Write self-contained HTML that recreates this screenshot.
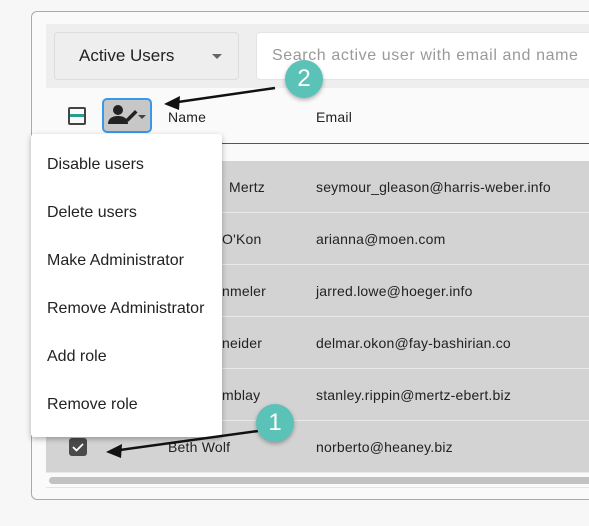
<!DOCTYPE html><html><head><style>
body{margin:0;width:589px;height:526px;background:#f7f7f7;font-family:"Liberation Sans",sans-serif;position:relative;overflow:hidden;color:#222}
.a{position:absolute}
.card{left:31px;top:11px;width:600px;height:487px;border:1px solid #aaa;border-radius:6px;background:#fafafa}
.row{left:46px;width:560px;height:51px;background:#d3d3d3;border-bottom:1px solid #e8e8e8}
.t{font-size:14px;color:#222;letter-spacing:.2px}
.m{left:47px;font-size:16px;color:#222}
.badge{width:38px;height:38px;border-radius:50%;background:#5bc2b8;color:#fff;font-size:24px;text-align:center;line-height:38px;box-shadow:0 2px 4px rgba(0,0,0,.3)}
</style></head><body>
<div class="a card"></div>
<div class="a" style="left:46px;top:24px;width:560px;height:64px;background:#eee"></div>
<div class="a" style="left:54px;top:32px;width:183px;height:46px;border:1px solid #ddd;border-radius:4px;background:#eee"></div>
<div class="a" style="left:79px;top:46px;font-size:17px;color:#222">Active Users</div>
<div class="a" style="left:212px;top:54px;border-left:5px solid transparent;border-right:5px solid transparent;border-top:5px solid #666"></div>
<div class="a" style="left:256px;top:32px;width:340px;height:46px;border:1px solid #e4e4e4;border-radius:4px;background:#fff"></div>
<div class="a" style="left:272px;top:47px;font-size:16px;color:#999;letter-spacing:.6px">Search active user with email and name</div>
<div class="a" style="left:68px;top:107px;width:18px;height:18px;border:2px solid #444;border-radius:2px;box-sizing:border-box"></div>
<div class="a" style="left:70px;top:114px;width:14px;height:3px;background:#2a9d8f"></div>
<div class="a" style="left:102px;top:98px;width:50px;height:35px;border:2px solid #3b97e8;border-radius:5px;background:#c7c7c7;box-sizing:border-box"></div>
<svg class="a" style="left:104px;top:100px" width="46" height="31"><circle cx="14" cy="10" r="5" fill="#222"/><path d="M4 24c0-6 5-8 10-8s10 2 10 8z" fill="#222"/><path d="M22 19l9-9 2.5 2.5-9 9h-2.5z" fill="#222"/><path d="M34 15h8l-4 4z" fill="#444"/></svg>
<div class="a t" style="left:168px;top:109px">Name</div>
<div class="a t" style="left:316px;top:109px">Email</div>
<div class="a" style="left:46px;top:143px;width:560px;height:1px;background:#555"></div>
<div class="a row" style="top:161px"></div><div class="a row" style="top:213px"></div><div class="a row" style="top:265px"></div><div class="a row" style="top:317px"></div><div class="a row" style="top:369px"></div><div class="a row" style="top:421px"></div>
<div class="a t" style="left:229px;top:179px">Mertz</div><div class="a t" style="left:316px;top:179px">seymour_gleason@harris-weber.info</div>
<div class="a t" style="left:222px;top:231px">O'Kon</div><div class="a t" style="left:316px;top:231px">arianna@moen.com</div>
<div class="a t" style="left:222px;top:283px">nmeler</div><div class="a t" style="left:316px;top:283px">jarred.lowe@hoeger.info</div>
<div class="a t" style="left:222px;top:335px">neider</div><div class="a t" style="left:316px;top:335px">delmar.okon@fay-bashirian.co</div>
<div class="a t" style="left:222px;top:387px">mblay</div><div class="a t" style="left:316px;top:387px">stanley.rippin@mertz-ebert.biz</div>
<div class="a t" style="left:168px;top:439px">Beth Wolf</div><div class="a t" style="left:316px;top:439px">norberto@heaney.biz</div>
<div class="a" style="left:69px;top:438px;width:18px;height:18px;background:#4a4a4a;border-radius:3px"></div>
<svg class="a" style="left:69px;top:438px" width="18" height="18"><path d="M4 9l3.5 3.5L14 6" stroke="#fff" stroke-width="1.8" fill="none"/></svg>
<div class="a" style="left:49px;top:477px;width:560px;height:7px;background:#c2c2c2;border-radius:4px"></div>
<div class="a" style="left:46px;top:487px;width:560px;height:1px;background:#e4e4e4"></div>
<div class="a" style="left:31px;top:134px;width:191px;height:303px;background:#fff;box-shadow:0 2px 6px rgba(0,0,0,.3);border-radius:3px"></div>
<div class="a m" style="top:156px">Disable users</div>
<div class="a m" style="top:204px">Delete users</div>
<div class="a m" style="top:252px">Make Administrator</div>
<div class="a m" style="top:300px">Remove Administrator</div>
<div class="a m" style="top:348px">Add role</div>
<div class="a m" style="top:396px">Remove role</div>
<svg class="a" style="left:0;top:0" width="589" height="526"><path d="M275 88L178 102" stroke="#111" stroke-width="2.5"/><path d="M164 104l16-8-1 14z" fill="#111"/><path d="M258 431L120 450" stroke="#111" stroke-width="2.5"/><path d="M106 452l16-8-1 14z" fill="#111"/></svg>
<div class="a badge" style="left:285px;top:60px">2</div>
<div class="a badge" style="left:256px;top:404px">1</div>
</body></html>
